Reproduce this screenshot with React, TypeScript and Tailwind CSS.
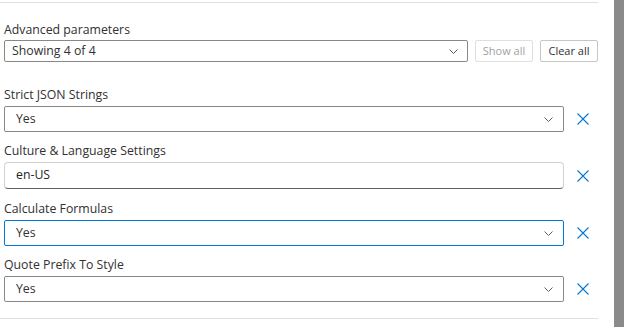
import React from "react";

function Chevron() {
  return (
    <svg width="9" height="5" viewBox="0 0 9 5" fill="none" className="shrink-0">
      <path d="M0.5 0.5 L4.5 4.5 L8.5 0.5" stroke="#605e5c" strokeWidth="1" />
    </svg>
  );
}

function Remove() {
  return (
    <button className="ml-[12px] flex h-[14px] w-[14px] items-center justify-center">
      <svg width="12" height="12" viewBox="0 0 12 12" fill="none">
        <path d="M0.5 0.5 L11.5 11.5 M11.5 0.5 L0.5 11.5" stroke="#0078d4" strokeWidth="1.1" />
      </svg>
    </button>
  );
}

function Label({ text, className }: { text: string; className?: string }) {
  return <p className={"h-[18px] leading-[18px] text-[12.3px] text-[#323130] " + (className ?? "")}>{text}</p>;
}

function Select({ value, focused }: { value: string; focused?: boolean }) {
  return (
    <div
      className={
        "flex h-[26px] w-[560px] items-center justify-between rounded-[2px] border pl-[11px] pr-[10px] " +
        (focused ? "border-[#0078d4]" : "border-[#8a8886]")
      }
    >
      <span className="text-[12.3px] text-[#323130]">{value}</span>
      <Chevron />
    </div>
  );
}

export default function App() {
  return (
    <div className="flex h-[327px] w-[624px] overflow-hidden bg-white font-['Open_Sans',sans-serif]">
      <div className="flex w-[598px] flex-col">
        <div className="mt-[2px] h-px w-full bg-[#e1dfdd]" />

        <div className="pl-1">
          <Label text="Advanced parameters" className="mt-[18px]" />
          <div className="mt-[1px] flex items-center">
            <div className="flex h-[22px] w-[464px] items-center justify-between rounded-[2px] border border-[#8a8886] pl-[7px] pr-[9px]">
              <span className="text-[12.3px] text-[#323130]">Showing 4 of 4</span>
              <Chevron />
            </div>
            <button className="ml-[7px] h-[22px] w-[58px] rounded-[2px] border border-[#e1dfdd] text-[11px] text-[#a19f9d]">
              Show all
            </button>
            <button className="ml-[7px] h-[22px] w-[58px] rounded-[2px] border border-[#c8c6c4] text-[11px] text-[#323130]">
              Clear all
            </button>
          </div>

          <Label text="Strict JSON Strings" className="mt-[24px]" />
          <div className="mt-[2px] flex items-center">
            <Select value="Yes" />
            <Remove />
          </div>

          <Label text="Culture & Language Settings" className="mt-[10px]" />
          <div className="mt-[2px] flex items-center">
            <div className="flex h-[27px] w-[560px] items-center rounded-[4px] border border-[#d1d1d1] border-b-[#616161] pl-[11px]">
              <span className="text-[12.3px] text-[#242424]">en-US</span>
            </div>
            <Remove />
          </div>

          <Label text="Calculate Formulas" className="mt-[11px]" />
          <div className="mt-[2px] flex items-center">
            <Select value="Yes" focused />
            <Remove />
          </div>

          <Label text="Quote Prefix To Style" className="mt-[10px]" />
          <div className="mt-[2px] flex items-center">
            <Select value="Yes" />
            <Remove />
          </div>
        </div>

        <div className="mt-[16px] h-px w-full bg-[#e1dfdd]" />
      </div>
      <div className="ml-[16px] h-full w-[10px] bg-[#8a8a8a]" />
    </div>
  );
}
